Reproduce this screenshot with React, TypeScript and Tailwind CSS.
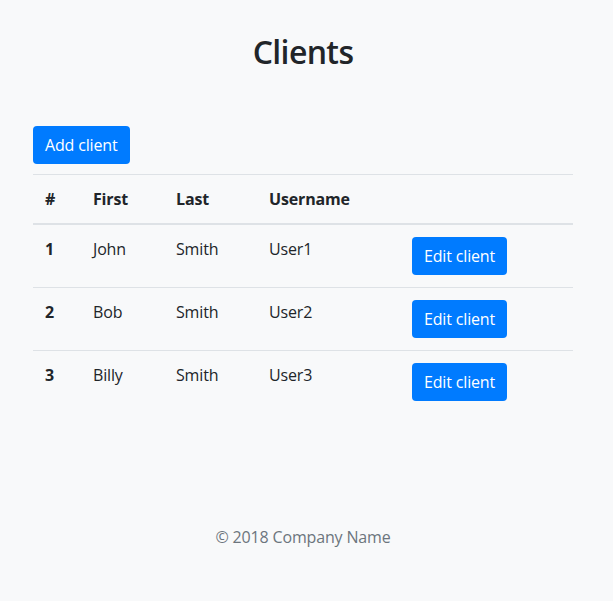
import React from 'react';

const clients = [
  { id: 1, first: 'John', last: 'Smith', username: 'User1' },
  { id: 2, first: 'Bob', last: 'Smith', username: 'User2' },
  { id: 3, first: 'Billy', last: 'Smith', username: 'User3' },
];

export default function App() {
  return (
    <div
      className="min-h-[601px] w-full bg-[#f8f9fa] text-[#212529] text-base tracking-[-0.01em]"
      style={{ fontFamily: '"Segoe UI", "Open Sans", Arial, sans-serif' }}
    >
      <div className="ml-[33px] w-[540px] pt-[33px]">
        <h2 className="text-center text-[32px] font-semibold leading-[1.2] tracking-[-0.02em]">Clients</h2>

        <div className="mt-[55px]">
          <button className="h-[38px] rounded bg-[#007bff] px-3 leading-6 text-white">
            Add client
          </button>
        </div>

        <table className="mt-[10px] w-full border-collapse text-left">
          <thead>
            <tr>
              <th className="w-[48px] border-t border-b-2 border-[#dee2e6] p-3 font-bold leading-6">#</th>
              <th className="w-[83px] border-t border-b-2 border-[#dee2e6] p-3 font-bold leading-6">First</th>
              <th className="w-[93px] border-t border-b-2 border-[#dee2e6] p-3 font-bold leading-6">Last</th>
              <th className="w-[143px] border-t border-b-2 border-[#dee2e6] p-3 font-bold leading-6">Username</th>
              <th className="border-t border-b-2 border-[#dee2e6] p-3" />
            </tr>
          </thead>
          <tbody>
            {clients.map((c) => (
              <tr key={c.id}>
                <th className="border-t border-[#dee2e6] p-3 align-top font-bold leading-6">{c.id}</th>
                <td className="border-t border-[#dee2e6] p-3 align-top leading-6">{c.first}</td>
                <td className="border-t border-[#dee2e6] p-3 align-top leading-6">{c.last}</td>
                <td className="border-t border-[#dee2e6] p-3 align-top leading-6">{c.username}</td>
                <td className="border-t border-[#dee2e6] p-3 align-top">
                  <button className="h-[38px] rounded bg-[#007bff] px-3 leading-6 text-white">
                    Edit client
                  </button>
                </td>
              </tr>
            ))}
          </tbody>
        </table>

        <footer className="mt-[112px] text-center leading-6 text-[#6c757d]">
          © 2018 Company Name
        </footer>
      </div>
    </div>
  );
}
